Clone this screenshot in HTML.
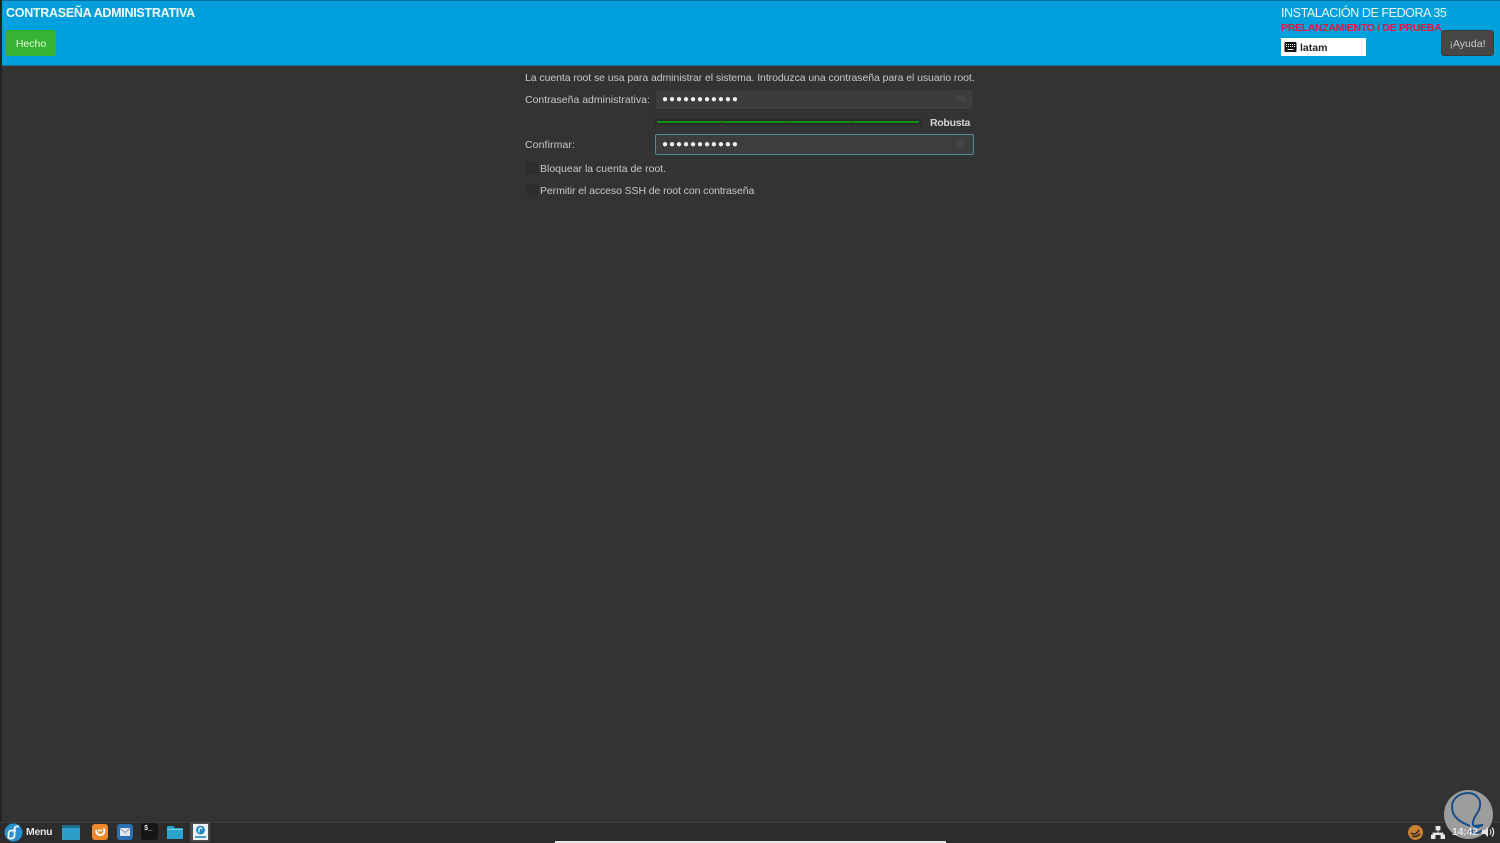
<!DOCTYPE html>
<html lang="es"><head><meta charset="utf-8"><style>
html,body{margin:0;padding:0;width:1500px;height:843px;overflow:hidden;background:#333;font-family:"Liberation Sans",sans-serif}
.a{position:absolute;white-space:nowrap}
.t{font-size:10.5px;color:#c8c8c8;line-height:14px;letter-spacing:-0.07px}
.input{background:#3c3c3c;border:1px solid #2f2f2f;border-radius:2px;box-sizing:border-box;left:655px;width:319px;height:21px}
.dots{left:662px;color:#eee;font-size:10px;line-height:10px;letter-spacing:0.95px}
.cb{width:12px;height:12px;background:#2e2e2e;border-radius:2px;left:526px}
</style></head><body>
<div class="a" style="left:0;top:0;width:1500px;height:843px;background:#333"></div>
<div class="a" style="left:0;top:0;width:1500px;height:66px;background:#00a0dd;border-top:1px solid #0a6f9c;box-sizing:border-box"></div>
<div class="a" style="left:0;top:65px;width:1500px;height:1px;background:#1c6f92"></div>
<div class="a" style="left:0;top:0;width:2px;height:843px;background:#232323"></div>
<div class="a" style="left:6px;top:5px;font-size:12.5px;line-height:16px;font-weight:bold;color:#f4fbff;letter-spacing:-0.28px">CONTRASEÑA ADMINISTRATIVA</div>
<div class="a" style="left:6px;top:30px;width:50px;height:26px;background:#36b332;border-radius:2px;color:#e6ffe0;font-size:10.5px;line-height:28px;text-align:center">Hecho</div>
<div class="a" style="left:1281px;top:5px;font-size:12.5px;line-height:16px;color:#eef8fd;letter-spacing:-0.42px">INSTALACIÓN DE FEDORA 35</div>
<div class="a" style="left:1281px;top:21px;font-size:10.5px;line-height:14px;font-weight:bold;color:#e0173f;letter-spacing:-0.31px">PRELANZAMIENTO / DE PRUEBA</div>
<div class="a" style="left:1281px;top:38px;width:85px;height:18px;background:#fff"></div>
<svg class="a" style="left:1284px;top:41px" width="13" height="12" viewBox="0 0 13 12"><rect x="0.5" y="1" width="12" height="10" rx="1" fill="#111"/><path d="M2 3.5h9M2 5.5h9" stroke="#fff" stroke-width="1" stroke-dasharray="1 1"/><path d="M3.5 8.5h6" stroke="#fff"/></svg>
<div class="a" style="left:1300px;top:42px;font-size:10.5px;line-height:13px;font-weight:bold;color:#222">latam</div>
<div class="a" style="left:1441px;top:30px;width:53px;height:26px;background:#474747;border:1px solid #3a3a3a;box-sizing:border-box;border-radius:3px;color:#c9c9c9;font-size:10.5px;line-height:26px;text-align:center">¡Ayuda!</div>

<div class="a t" style="left:525px;top:71px">La cuenta root se usa para administrar el sistema. Introduzca una contraseña para el usuario root.</div>
<div class="a t" style="left:525px;top:93px;letter-spacing:0">Contraseña administrativa:</div>
<div class="a input" style="top:89px"></div>
<div class="a dots" style="top:95px">●●●●●●●●●●●</div>
<div class="a" style="left:956px;top:95px;width:10px;height:7px;border-radius:50%;background:#444"></div>
<div class="a" style="left:655px;top:118.5px;width:266px;height:6px;background:#2a2a2a;border-radius:2px"></div>
<div class="a" style="left:657px;top:120.5px;width:262px;height:2px;background:#0c9012"></div>
<div class="a" style="left:721px;top:120px;width:1px;height:3px;background:#2a4a2a"></div>
<div class="a" style="left:786px;top:120px;width:1px;height:3px;background:#2a4a2a"></div>
<div class="a" style="left:851px;top:120px;width:1px;height:3px;background:#2a4a2a"></div>
<div class="a t" style="left:930px;top:116px;font-weight:bold;color:#d4d4d4;letter-spacing:-0.28px">Robusta</div>
<div class="a t" style="left:525px;top:138px;letter-spacing:0.1px">Confirmar:</div>
<div class="a input" style="top:134px;background:#3c3d3e;border-color:#4f8a9e"></div>
<div class="a dots" style="top:140px">●●●●●●●●●●●</div>
<div class="a" style="left:956px;top:140px;width:10px;height:7px;border-radius:50%;background:#444"></div>
<div class="a cb" style="top:162px"></div>
<div class="a t" style="left:540px;top:162px;letter-spacing:0">Bloquear la cuenta de root.</div>
<div class="a cb" style="top:184px"></div>
<div class="a t" style="left:540px;top:184px;letter-spacing:-0.09px">Permitir el acceso SSH de root con contraseña</div>

<div class="a" style="left:0;top:822px;width:1500px;height:21px;background:#2c2c2c;border-top:1px solid #3d3d3d;box-sizing:border-box"></div>
<div class="a" style="left:555px;top:841px;width:391px;height:2px;background:#e8e8e8"></div>
<svg class="a" style="left:4px;top:823px" width="19" height="19" viewBox="0 0 19 19"><circle cx="9.5" cy="9.5" r="9" fill="#2a8fcf"/><path d="M4.5 15.5V10.5a3 3 0 0 1 3-3H12M5 15.5h2.5a3 3 0 0 0 3-3V6a2.6 2.6 0 0 1 2.6-2.6H15" fill="none" stroke="#fff" stroke-width="1.7"/></svg>
<div class="a" style="left:26px;top:826px;font-size:10.5px;line-height:13px;font-weight:bold;color:#e4e4e4;letter-spacing:-0.3px">Menu</div>
<div class="a" style="left:62px;top:825px;width:18px;height:15px;background:#2f9dc9;border-top:3px solid #1f6f92;box-sizing:border-box"></div>
<div class="a" style="left:92px;top:824px;width:16px;height:16px;background:#ee8a2c;border-radius:3px"></div>
<svg class="a" style="left:92px;top:824px" width="16" height="16" viewBox="0 0 16 16"><path d="M4.5 6a4 4 0 1 0 7-1.5" fill="none" stroke="#fff" stroke-width="2"/><path d="M6 6.5h4" stroke="#fff" stroke-width="1.5"/></svg>
<div class="a" style="left:117px;top:824px;width:16px;height:16px;background:#2b6fb5;border-radius:3px"></div>
<svg class="a" style="left:117px;top:824px" width="16" height="16" viewBox="0 0 16 16"><rect x="3" y="4" width="10" height="8" fill="#dfe6f2"/><path d="M3 4.5l5 4 5-4" fill="none" stroke="#8a9cc0"/></svg>
<div class="a" style="left:141px;top:823px;width:17px;height:17px;background:#151515;border-radius:3px"></div>
<div class="a" style="left:144px;top:825px;font-size:7px;line-height:9px;font-weight:bold;color:#ddd;font-family:'Liberation Mono',monospace">$_</div>
<svg class="a" style="left:166px;top:824px" width="18" height="16" viewBox="0 0 18 16"><path d="M1 15V3q0-1 1-1h5l2 2h7q1 0 1 1v10z" fill="#2aa3cc"/><path d="M1 5.5h16" stroke="#7fd0e8" stroke-width="1"/></svg>
<div class="a" style="left:190px;top:822px;width:20px;height:20px;background:#4a4a4a"></div>
<div class="a" style="left:193px;top:824px;width:15px;height:16px;background:#eef4f8"></div>
<svg class="a" style="left:193px;top:824px" width="15" height="16" viewBox="0 0 15 16"><circle cx="7.5" cy="6" r="4.4" fill="#1c85c4"/><path d="M6 8.5V5.5a1.5 1.5 0 0 1 3 0" fill="none" stroke="#fff" stroke-width="1.2"/><path d="M2 13h11" stroke="#1c85c4" stroke-width="1.6"/></svg>
<svg class="a" style="left:1407px;top:824px" width="17" height="17" viewBox="0 0 17 17"><circle cx="8.5" cy="8.5" r="7.5" fill="#c98234"/><path d="M4 9c3 2 6 1 8-3M5 12c3 1 6 0 8-2" fill="none" stroke="#3a2a20" stroke-width="1.6"/></svg>
<svg class="a" style="left:1431px;top:826px" width="14" height="13" viewBox="0 0 14 13"><path d="M5 0h4v4H5zM0 9h4v4H0zM10 9h4v4h-4zM7 4v3M2 9V7h10v2" fill="#e6e6e6" stroke="#e6e6e6" stroke-width=".8"/></svg>
<div class="a" style="left:1444px;top:790px;width:49px;height:49px;border-radius:50%;background:#a6a6a6;opacity:.92"></div>
<svg class="a" style="left:1444px;top:789px" width="49" height="52" viewBox="0 0 49 52"><path d="M26 37C16 33 8 28 8 18 8 9 16 4 24 4c8 0 13 6 12 13-1 8-8 11-7 19 1 2 7 0 10 0-5 2-11 5-13 7 4 2 10 1 12-2" fill="none" stroke="#174f86" stroke-width="2"/></svg>
<div class="a" style="left:1452px;top:826px;font-size:10.5px;line-height:13px;font-weight:bold;color:#e8e8e8;letter-spacing:-0.2px">14:42</div>
<svg class="a" style="left:1482px;top:826px" width="13" height="12" viewBox="0 0 13 12"><path d="M0 4h3l3-3v10L3 8H0z" fill="#e6e6e6"/><path d="M8 3.5a4 4 0 0 1 0 5M10 1.5a7 7 0 0 1 0 9" fill="none" stroke="#e6e6e6" stroke-width="1.2"/></svg>
</body></html>
